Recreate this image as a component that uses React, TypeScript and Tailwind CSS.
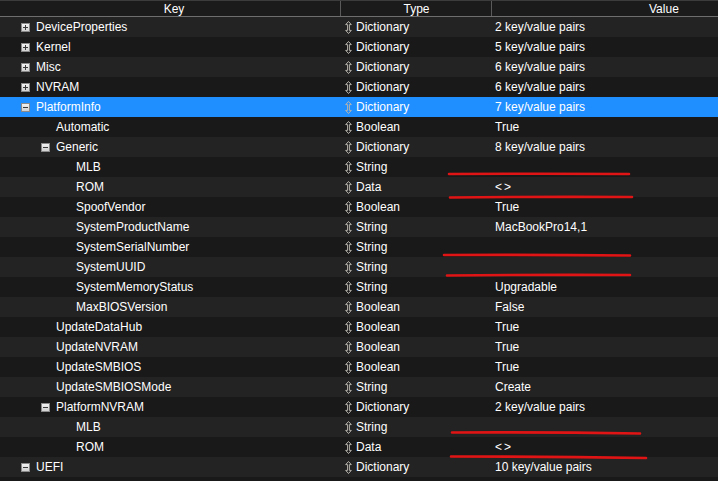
import React from "react";

type Row = {
  key: string;
  level: number;
  toggle?: "plus" | "minus";
  type: string;
  value: string;
  selected?: boolean;
};

const rows: Row[] = [
  { key: "DeviceProperties", level: 0, toggle: "plus", type: "Dictionary", value: "2 key/value pairs" },
  { key: "Kernel", level: 0, toggle: "plus", type: "Dictionary", value: "5 key/value pairs" },
  { key: "Misc", level: 0, toggle: "plus", type: "Dictionary", value: "6 key/value pairs" },
  { key: "NVRAM", level: 0, toggle: "plus", type: "Dictionary", value: "6 key/value pairs" },
  { key: "PlatformInfo", level: 0, toggle: "minus", type: "Dictionary", value: "7 key/value pairs", selected: true },
  { key: "Automatic", level: 1, type: "Boolean", value: "True" },
  { key: "Generic", level: 1, toggle: "minus", type: "Dictionary", value: "8 key/value pairs" },
  { key: "MLB", level: 2, type: "String", value: "" },
  { key: "ROM", level: 2, type: "Data", value: "<>" },
  { key: "SpoofVendor", level: 2, type: "Boolean", value: "True" },
  { key: "SystemProductName", level: 2, type: "String", value: "MacBookPro14,1" },
  { key: "SystemSerialNumber", level: 2, type: "String", value: "" },
  { key: "SystemUUID", level: 2, type: "String", value: "" },
  { key: "SystemMemoryStatus", level: 2, type: "String", value: "Upgradable" },
  { key: "MaxBIOSVersion", level: 2, type: "Boolean", value: "False" },
  { key: "UpdateDataHub", level: 1, type: "Boolean", value: "True" },
  { key: "UpdateNVRAM", level: 1, type: "Boolean", value: "True" },
  { key: "UpdateSMBIOS", level: 1, type: "Boolean", value: "True" },
  { key: "UpdateSMBIOSMode", level: 1, type: "String", value: "Create" },
  { key: "PlatformNVRAM", level: 1, toggle: "minus", type: "Dictionary", value: "2 key/value pairs" },
  { key: "MLB", level: 2, type: "String", value: "" },
  { key: "ROM", level: 2, type: "Data", value: "<>" },
  { key: "UEFI", level: 0, toggle: "minus", type: "Dictionary", value: "10 key/value pairs" },
];

function ToggleBox({ kind }: { kind: "plus" | "minus" }) {
  return (
    <svg width="9" height="9" viewBox="0 0 9 9" className="shrink-0">
      <defs>
        <linearGradient id="tg" x1="0" y1="0" x2="0" y2="1">
          <stop offset="0" stopColor="#f4f4f4" />
          <stop offset="1" stopColor="#cfcfcf" />
        </linearGradient>
      </defs>
      <rect x="0.5" y="0.5" width="8" height="8" fill="url(#tg)" stroke="#8a8a8a" />
      <rect x="2" y="4" width="5" height="1" fill="#3a3a3a" />
      {kind === "plus" && <rect x="4" y="2" width="1" height="5" fill="#3a3a3a" />}
    </svg>
  );
}

function UpDown() {
  return (
    <svg width="7" height="13" viewBox="0 0 7 13" className="shrink-0">
      <path
        d="M3.5 0.5 L6.3 3.6 L4.4 3.6 L4.4 9.4 L6.3 9.4 L3.5 12.5 L0.7 9.4 L2.6 9.4 L2.6 3.6 L0.7 3.6 Z"
        fill="none"
        stroke="#b8b4ae"
        strokeWidth="1"
        strokeLinejoin="round"
      />
    </svg>
  );
}

export default function App() {
  return (
    <div
      className="relative w-[718px] h-[481px] overflow-hidden bg-[#191919] text-[12px] text-white"
      style={{ fontFamily: '"Liberation Sans", Arial, sans-serif' }}
    >
      {/* header */}
      <div className="grid grid-cols-[340px_1px_150px_1px_1fr] h-[15px] bg-[#1b1b1b] border-t border-[#3c3c3c] border-b border-b-[#6e6e6e] box-content">
        <div className="flex items-center justify-center pl-[8px] leading-none">Key</div>
        <div className="bg-[#5a5a5a]" />
        <div className="flex items-center justify-center pl-[1px] leading-none">Type</div>
        <div className="bg-[#5a5a5a]" />
        <div className="flex items-center pl-[157px] leading-none">Value</div>
      </div>
      {/* rows */}
      <div className="flex flex-col">
        {rows.map((r, i) => {
          const bg = r.selected ? "bg-[#1f8fff]" : i % 2 === 0 ? "bg-[#232323]" : "bg-[#191919]";
          return (
            <div key={i} className={`grid grid-cols-[341px_150px_1fr] h-[20px] items-center ${bg}`}>
              <div
                className="flex items-center whitespace-nowrap"
                style={{ paddingLeft: 21 + r.level * 20 }}
              >
                <div className="w-[15px] flex items-center">
                  {r.toggle && <ToggleBox kind={r.toggle} />}
                </div>
                <span>{r.key}</span>
              </div>
              <div className="flex items-center gap-[4px] pl-[4px]">
                <UpDown />
                <span>{r.type}</span>
              </div>
              <div className="pl-[4px] whitespace-nowrap">
                {r.value === "<>" ? <span className="tracking-[2px]">&lt;&gt;</span> : r.value}
              </div>
            </div>
          );
        })}
        <div className="h-[20px] bg-[#191919]" />
      </div>
      {/* red redaction strokes */}
      <svg className="absolute left-0 top-0 pointer-events-none" width="718" height="481">
        <g stroke="#e01414" strokeWidth="2.6" strokeLinecap="round" fill="none">
          <path d="M449 174 Q540 173.5 629 174" />
          <path d="M450 197.5 Q540 196.5 632 197" />
          <path d="M444 255 Q540 254.5 630 255.5" />
          <path d="M447 275.5 Q540 274.5 630 275" />
          <path d="M452 432.5 Q545 432 640 433.5" />
          <path d="M451 456.5 Q548 456.5 646 458" />
        </g>
      </svg>
    </div>
  );
}
